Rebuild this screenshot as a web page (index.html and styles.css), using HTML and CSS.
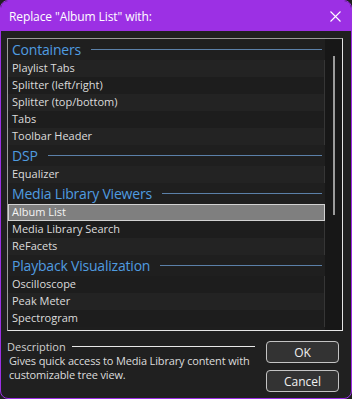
FILE: index.html
```html
<!DOCTYPE html>
<html>
<head>
<meta charset="utf-8">
<link rel="stylesheet" href="styles.css">
</head>
<body>
<div class="window">
  <div class="titlebar">
    <span class="title">Replace "Album List" with:</span>
    <svg class="close" width="11" height="11" viewBox="0 0 11 11"><path d="M0.5 0.5 L10.5 10.5 M10.5 0.5 L0.5 10.5" stroke="#ffffff" stroke-width="1.1" fill="none"/></svg>
  </div>
  <div class="body">
    <div class="list">
      <div class="rows">
        <div class="group"><span>Containers</span><i class="rule"></i></div>
        <div class="item light">Playlist Tabs</div>
        <div class="item dark">Splitter (left/right)</div>
        <div class="item light">Splitter (top/bottom)</div>
        <div class="item dark">Tabs</div>
        <div class="item light">Toolbar Header</div>
        <div class="group"><span>DSP</span><i class="rule"></i></div>
        <div class="item light">Equalizer</div>
        <div class="group"><span>Media Library Viewers</span><i class="rule"></i></div>
        <div class="item selected">Album List</div>
        <div class="item dark">Media Library Search</div>
        <div class="item light">ReFacets</div>
        <div class="group"><span>Playback Visualization</span><i class="rule"></i></div>
        <div class="item dark">Oscilloscope</div>
        <div class="item light">Peak Meter</div>
        <div class="item dark">Spectrogram</div>
      </div>
      <div class="scrollbar"><div class="thumb"></div></div>
    </div>
    <div class="footer">
      <div class="desc">
        <div class="desc-head"><span>Description</span><i class="desc-rule"></i></div>
        <p class="desc-text">Gives quick access to Media Library content with<br>customizable tree view.</p>
      </div>
      <div class="buttons">
        <button class="btn">OK</button>
        <button class="btn">Cancel</button>
      </div>
    </div>
  </div>
</div>
</body>
</html>
```

FILE: styles.css
```css
* { box-sizing: border-box; }
html, body {
  margin: 0;
  padding: 0;
  background: #202020;
}
body {
  font-family: "Open Sans", "Noto Sans", sans-serif;
  color: #dcdcdc;
}
.window {
  width: 352px;
  height: 399px;
  border: 1px solid #9c30e4;
  border-radius: 8px;
  background: #202020;
  overflow: hidden;
  display: flex;
  flex-direction: column;
}
.titlebar {
  height: 30px;
  flex: none;
  background: #9c30e4;
  display: flex;
  align-items: center;
  justify-content: space-between;
  padding: 0 10px 0 8px;
}
.title {
  color: #ffffff;
  font-size: 12px;
  letter-spacing: -0.1px;
}
.close { display: block; }
.body {
  flex: 1;
  display: flex;
  flex-direction: column;
  padding: 7px 8px 0 6px;
}
.list {
  height: 293px;
  flex: none;
  border: 1px solid #e6e6e6;
  border-top-color: #9a9a9a;
  border-left-color: #9a9a9a;
  display: flex;
  background: #1e1e1e;
}
.rows {
  width: 317px;
  display: flex;
  flex-direction: column;
}
.group {
  height: 21px;
  display: flex;
  align-items: center;
  padding: 0 3px 0 4px;
  background: #1f1f1f;
}
.group span {
  color: #4f9ce0;
  font-size: 14px;
  white-space: nowrap;
  letter-spacing: -0.2px;
}
.rule {
  flex: 1;
  height: 1px;
  background: #5b80a8;
  margin-left: 10px;
}
.item {
  height: 17px;
  line-height: 16px;
  padding-left: 4px;
  font-size: 11px;
  color: #dcdcdc;
  border-right: 1px solid #363636;
  white-space: nowrap;
}
.item.light { background: #232323; }
.item.dark { background: #1d1d1d; }
.item.selected {
  background: #7f7f7f;
  border: 1px solid #d2d2d2;
  padding-left: 3px;
  line-height: 14px;
  color: #f4f4f4;
}
.scrollbar {
  width: 17px;
  background: #171717;
  padding: 17px 0 0 8px;
}
.thumb {
  width: 2px;
  height: 159px;
  background: #9b9b9b;
}
.footer {
  flex: 1;
  display: flex;
  padding: 7px 4px 0 0;
}
.desc {
  width: 248px;
}
.desc-head {
  display: flex;
  align-items: center;
  height: 16px;
}
.desc-head span {
  font-size: 11px;
  color: #d0d0d0;
}
.desc-rule {
  flex: 1;
  height: 1px;
  background: #e8e8e8;
  margin-left: 6px;
}
.desc-text {
  margin: 0;
  padding-left: 2px;
  font-size: 11px;
  line-height: 14px;
  letter-spacing: -0.15px;
  white-space: nowrap;
  color: #dcdcdc;
}
.buttons {
  margin-left: auto;
  width: 73px;
  padding-top: 3px;
  display: flex;
  flex-direction: column;
  gap: 7px;
}
.btn {
  height: 22px;
  width: 73px;
  border: 1px solid #c4c4c4;
  border-radius: 4px;
  background: #333333;
  color: #f0f0f0;
  font-family: "Open Sans", "Noto Sans", sans-serif;
  font-size: 12px;
  padding: 0;
}
```
